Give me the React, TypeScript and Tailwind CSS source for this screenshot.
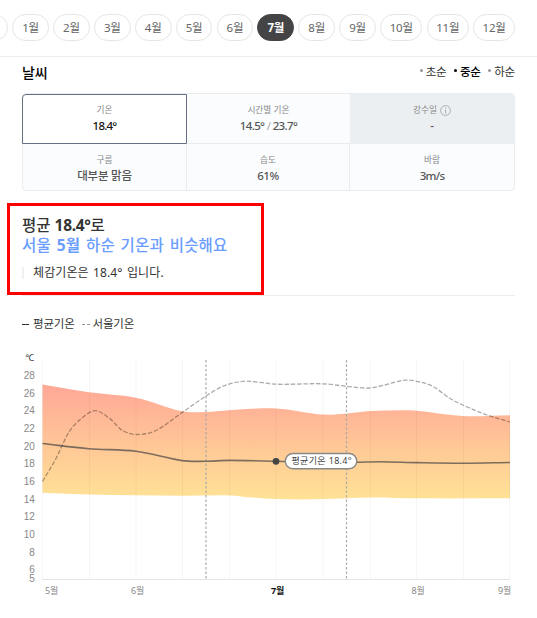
import clsx from 'clsx'

const months = ['1월', '2월', '3월', '4월', '5월', '6월', '7월', '8월', '9월', '10월', '11월', '12월']

type Point = [number, number]

const high: Point[] = [[42.5, 384.5], [89, 392.3], [136, 397.8], [182, 411.3], [205, 411.9], [229, 410.2], [276, 408.4], [323, 414.6], [347, 413.4], [370, 411], [402, 410.2], [417, 410.7], [463, 416], [510, 415.2]]
const low: Point[] = [[42.5, 492.8], [89, 494.5], [136, 495.2], [182, 495.7], [229, 495.4], [253, 497.6], [276, 499], [300, 499.5], [323, 499.1], [370, 497.5], [417, 498.3], [510, 498.3]]
const average: Point[] = [[42.5, 443.5], [89, 448.7], [136, 451.2], [182, 460.6], [205, 461.3], [229, 460.4], [276, 461.3], [323, 463], [357, 462.3], [380, 461.7], [417, 462.6], [463, 463.2], [510, 462.5]]
const seoul: Point[] = [[42.5, 481.5], [56, 458.5], [69, 432], [82, 418], [95, 410.7], [109, 418], [123, 430.8], [138, 434.5], [156, 430.5], [180, 414], [206, 396], [224, 385.8], [245, 381.2], [276, 384.2], [323, 383.8], [347, 386.4], [369, 388], [385, 385], [405, 380.2], [420, 382], [434, 387], [450, 398.5], [466, 406.5], [487, 415], [510, 422]]

const gridLines = [42.5, 89.5, 136, 182.5, 229.5, 276, 323, 370.5, 416.5, 463.5, 509.5]
const ticks = [28, 26, 24, 22, 20, 18, 16, 14, 12, 10, 8, 6, 5]
const axisMonths = [
  { label: '5월', x: 45 },
  { label: '6월', x: 131 },
  { label: '7월', x: 271, active: true },
  { label: '8월', x: 411.5 },
  { label: '9월', x: 498 },
]

// smooth curve through all the points
function curve(points: Point[]) {
  let d = ''
  for (let i = 0; i < points.length - 1; i++) {
    const p0 = points[i - 1] || points[i]
    const p1 = points[i]
    const p2 = points[i + 1]
    const p3 = points[i + 2] || p2
    const dx = (p2[0] - p1[0]) / 3
    const s1 = (p2[1] - p0[1]) / (p2[0] - p0[0])
    const s2 = (p3[1] - p1[1]) / (p3[0] - p1[0])
    d += ` C${p1[0] + dx},${p1[1] + s1 * dx} ${p2[0] - dx},${p2[1] - s2 * dx} ${p2[0]},${p2[1]}`
  }
  return d
}

const line = (points: Point[]) => `M${points[0].join(',')}${curve(points)}`

function area() {
  const back = [...low].reverse()
  return `${line(high)} L${back[0].join(',')}${curve(back)} Z`
}

function MonthTabs() {
  return (
    <nav className="h-[57px] border-b border-[#ececec] pt-[14px] overflow-hidden">
      <div className="flex -ml-[29px] gap-[4.2px] w-[560px]">
        <span className="w-[37px] h-[27px] shrink-0 rounded-full border border-[#e5e5e5]" />
        {months.map((month) => (
          <button
            key={month}
            className={clsx(
              'h-[27px] shrink-0 rounded-full border text-[11.5px] leading-[26px] text-center',
              month.length > 2 ? 'w-[42.3px]' : 'w-[36.7px]',
              month === '7월' ? 'bg-[#444446] border-[#444446] text-white font-bold' : 'border-[#e5e5e5] text-[#666]'
            )}
          >
            {month}
          </button>
        ))}
      </div>
    </nav>
  )
}

function PeriodPicker() {
  return (
    <ul className="flex gap-[7.5px] pt-px text-[11.5px] leading-4 text-[#333]">
      {['초순', '중순', '하순'].map((period) => (
        <li key={period} className={clsx('flex gap-[3px]', period === '중순' && 'font-medium text-black')}>
          <i className={clsx('size-[3px] mt-[5px] rounded-full', period === '중순' ? 'bg-black' : 'bg-[#999]')} />
          {period}
        </li>
      ))}
    </ul>
  )
}

function InfoIcon() {
  return (
    <svg width="11" height="11" viewBox="0 0 11 11" fill="none" stroke="#aaafb3" className="ml-[3px]">
      <circle cx="5.5" cy="5.5" r="4.9" strokeWidth="1" />
      <path d="M5.5 2.5v1M5.5 4.5v4" />
    </svg>
  )
}

function Cell({ label, className, info, children }: { label: string; className?: string; info?: boolean; children: React.ReactNode }) {
  return (
    <div className={clsx('flex flex-col items-center', className)}>
      <div className="flex h-3 items-center text-[8.7px] leading-3 tracking-normal text-[#888]">
        {label}
        {info && <InfoIcon />}
      </div>
      <div className="mt-[2px] text-[11.5px] leading-4 font-medium">{children}</div>
    </div>
  )
}

function WeatherTable() {
  return (
    <div className="mt-[10px] grid h-[98px] w-[493px] grid-cols-[164px_163px_164px] grid-rows-[49.5px_46.5px] rounded-[4px] border border-[#e9edf0] bg-[#fafcfe] text-[#555]">
      <Cell label="기온" className="-ml-px rounded-tl-[4px] border border-[#667085] bg-white pt-[9px] text-[#111] tracking-[-0.8px]">18.4°</Cell>
      <Cell label="시간별 기온" className="border-b border-[#e9edf0] pt-[10px] tracking-[-0.65px]">
        14.5°<span className="font-normal text-[#aaa]"> / </span>23.7°
      </Cell>
      <Cell label="강수일" info className="bg-[#ebeff2] pt-[10px]">-</Cell>
      <Cell label="구름" className="border-r border-[#e9edf0] pt-[10px]">대부분 맑음</Cell>
      <Cell label="습도" className="border-r border-[#e9edf0] pt-[10px] tracking-[-0.5px]">61%</Cell>
      <Cell label="바람" className="pt-[10px] tracking-[-0.7px]">3m/s</Cell>
    </div>
  )
}

function Summary() {
  return (
    <section className="relative mt-[25px] flow-root h-[80px] border-b border-[#ececec]">
      <div className="absolute -left-[15.5px] -top-[13px] h-[92px] w-[257px] border-[3px] border-[#f00]" />
      <p className="-mt-px text-[15.5px] leading-5 font-medium tracking-normal text-[#333]">
        평균 <b className="tracking-[-0.3px]">18.4°</b>로
      </p>
      <p className="text-[15.5px] leading-5 font-medium tracking-[0.2px] text-[#6b9dff] [word-spacing:1.5px]">
        서울 <b>5월</b> 하순 기온과 비슷해요
      </p>
      <p className="mt-[11px] flex items-center gap-[9px] text-[12px] leading-[14px] tracking-[0.1px] text-[#333] [word-spacing:1.2px]">
        <i className="h-3 w-[2px] bg-[#f0f1f5]" />
        체감기온은 18.4° 입니다.
      </p>
    </section>
  )
}

function Legend() {
  return (
    <div className="mt-[20px] flex items-center text-[11.5px] leading-4 text-[#333]">
      <i className="mr-1 h-px w-[7px] bg-[#333]" />
      평균기온
      <i className="ml-[7px] mr-[3px] w-[8px] border-t border-dashed border-[#999]" />
      서울기온
    </div>
  )
}

function TemperatureChart() {
  return (
    <svg width="537" height="273" viewBox="0 345 537 273" className="mt-[13px] -ml-[22px] block">
      <defs>
        <linearGradient id="heat" x1="0" y1="384" x2="0" y2="499" gradientUnits="userSpaceOnUse">
          <stop offset="0" stopColor="#ffa797" />
          <stop offset="1" stopColor="#ffe296" />
        </linearGradient>
      </defs>
      <path d={area()} fill="url(#heat)" />
      {gridLines.map((x) => (
        <path key={x} d={`M${x} 359V579`} stroke="#000" strokeOpacity=".035" />
      ))}
      <path d="M42 579.5H510" stroke="#e5e5e5" />
      <path d="M206 360V580M346.5 360V580" stroke="#aaa" strokeWidth="1.2" strokeDasharray="2.5 2" />
      <path d={line(seoul)} fill="none" stroke="#000" strokeOpacity=".33" strokeWidth="1.3" strokeDasharray="4.5 1.8" />
      <path d={line(average)} fill="none" stroke="#444" strokeOpacity=".7" strokeWidth="1.6" />
      <circle cx="276" cy="461.3" r="3.4" fill="#444" />
      <rect x="285.3" y="453.5" width="71.5" height="15.3" rx="7.6" fill="#fff" stroke="#888" strokeWidth="1.4" />
      <text x="291.5" y="464.2" fontSize="9" fill="#444" textLength="60">평균기온 18.4°</text>
      <text x="25.5" y="361" fontSize="9" fill="#333">℃</text>
      <g fontSize="10" fill="#888" textAnchor="end" fontFamily="Liberation Sans, sans-serif">
        {ticks.map((t) => (
          <text key={t} x="34.5" y={(t === 5 ? 578.8 : 375.5 + (28 - t) * 8.83) + 3.5}>{t}</text>
        ))}
      </g>
      <g fontSize="9">
        {axisMonths.map((m) => (
          <text key={m.label} x={m.x} y="594" fill={m.active ? '#111' : '#888'} fontWeight={m.active ? 700 : 400}>{m.label}</text>
        ))}
      </g>
    </svg>
  )
}

export default function App() {
  return (
    <div className="h-[618px] w-[537px] overflow-hidden bg-white font-['Noto_Sans','Noto_Sans_CJK_KR',sans-serif] tracking-[-0.2px]">
      <MonthTabs />
      <main className="ml-[22px] w-[493px]">
        <header className="flex items-start justify-between pt-[6px]">
          <h2 className="text-[14px] leading-5 font-medium text-black">날씨</h2>
          <PeriodPicker />
        </header>
        <WeatherTable />
        <Summary />
        <Legend />
        <TemperatureChart />
      </main>
    </div>
  )
}
